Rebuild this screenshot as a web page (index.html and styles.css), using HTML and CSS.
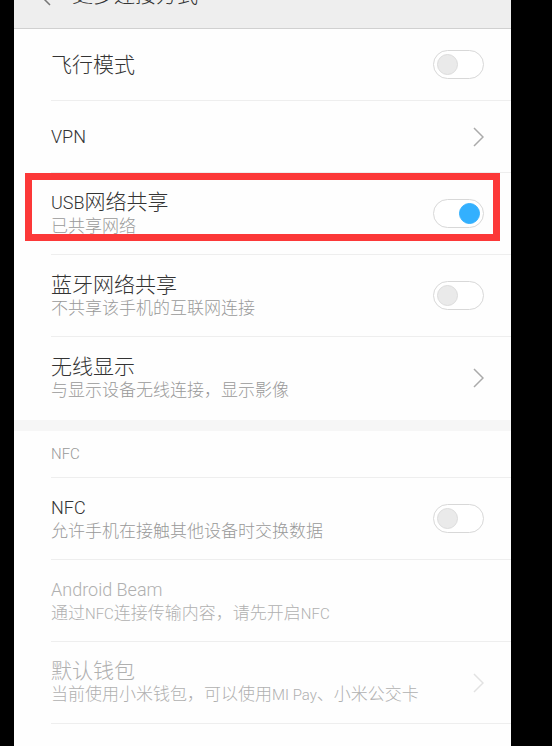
FILE: index.html
```html
<!DOCTYPE html>
<html lang="zh-CN">
<head>
    <meta charset="UTF-8">
    <meta name="viewport" content="width=device-width, initial-scale=1.0">
    <title>更多连接方式</title>
    <link rel="stylesheet" href="styles.css">
</head>
<body>
    <div class="screen">
        <header class="header">
            <a href="#" class="back" aria-label="返回">
                <svg width="12" height="24" viewBox="0 0 12 24"><path d="M11 2L1 12l10 10"/></svg>
            </a>
            <h1 class="header-title">更多连接方式</h1>
        </header>

        <main>
            <section class="group">
                <label class="row single">
                    <span class="title">飞行模式</span>
                    <input type="checkbox" class="switch">
                </label>
                <a href="#" class="row single">
                    <span class="title"><span class="latin">VPN</span></span>
                    <svg class="arrow" width="11" height="20" viewBox="0 0 11 20"><path d="M1 1l9 9-9 9"/></svg>
                </a>
                <label class="row highlight">
                    <span class="text">
                        <span class="title"><span class="latin">USB</span>网络共享</span>
                        <span class="summary">已共享网络</span>
                    </span>
                    <input type="checkbox" class="switch" checked>
                </label>
                <label class="row">
                    <span class="text">
                        <span class="title">蓝牙网络共享</span>
                        <span class="summary">不共享该手机的互联网连接</span>
                    </span>
                    <input type="checkbox" class="switch">
                </label>
                <a href="#" class="row">
                    <span class="text">
                        <span class="title">无线显示</span>
                        <span class="summary">与显示设备无线连接，显示影像</span>
                    </span>
                    <svg class="arrow" width="11" height="20" viewBox="0 0 11 20"><path d="M1 1l9 9-9 9"/></svg>
                </a>
            </section>

            <!-- NFC settings -->
            <section class="group">
                <h2 class="group-title"><span class="latin">NFC</span></h2>
                <label class="row">
                    <span class="text">
                        <span class="title"><span class="latin">NFC</span></span>
                        <span class="summary">允许手机在接触其他设备时交换数据</span>
                    </span>
                    <input type="checkbox" class="switch">
                </label>
                <a href="#" class="row disabled" aria-disabled="true">
                    <span class="text">
                        <span class="title"><span class="latin">Android Beam</span></span>
                        <span class="summary">通过<span class="latin">NFC</span>连接传输内容，请先开启<span class="latin">NFC</span></span>
                    </span>
                </a>
                <a href="#" class="row disabled" aria-disabled="true">
                    <span class="text">
                        <span class="title">默认钱包</span>
                        <span class="summary">当前使用小米钱包，可以使用<span class="latin">MI Pay</span>、小米公交卡</span>
                    </span>
                    <svg class="arrow" width="11" height="20" viewBox="0 0 11 20"><path d="M1 1l9 9-9 9"/></svg>
                </a>
            </section>
        </main>
    </div>
</body>
</html>
```

FILE: styles.css
```css
*, *::before, *::after {
    box-sizing: border-box;
}

body {
    margin: 0;
    padding: 0 41px 0 14px;
    background-color: #000;
    font-family: Roboto, "Noto Sans CJK SC", sans-serif;
    font-weight: 300;
    color: #333;
    overflow: hidden;
}

.screen {
    display: flow-root;
    min-height: 100vh;
    background-color: #fefefe;
}

/* the bar is partly scrolled off the top */
.header {
    display: flex;
    align-items: center;
    gap: 21px;
    height: 68px;
    margin-top: -39px;
    padding-left: 25px;
    background-color: #eee;
    border-bottom: 1px solid #d0d0d0;
}

.back {
    display: flex;
}

.back svg, .arrow {
    fill: none;
    stroke: #777;
    stroke-width: 1.5;
}

.header-title {
    margin: 0;
    font-size: 21px;
    font-weight: 300;
    line-height: 24px;
}

.group {
    padding-bottom: 1px;
}

.group + .group {
    border-top: 11px solid #f6f6f6;
}

.group-title {
    margin: 0 0 0 37px;
    border-bottom: 1px solid #eee;
    font-size: 17px;
    font-weight: 300;
    line-height: 45px;
    color: #999;
}

.row {
    position: relative;
    display: flex;
    align-items: center;
    justify-content: space-between;
    min-height: 82px;
    margin-left: 37px;
    padding-right: 27px;
    border-bottom: 1px solid #eee;
    color: #333;
    text-decoration: none;
}

.group:first-child .row:last-child {
    border-bottom: none;
}

.single {
    min-height: 72px;
}

.text {
    display: flex;
    flex-direction: column;
}

.title {
    font-size: 21px;
    line-height: 24px;
}

.title .latin {
    font-size: 18px;
}

.summary {
    font-size: 17px;
    line-height: 22px;
    color: #999;
    white-space: nowrap;
}

.summary .latin, .group-title .latin {
    font-size: 15px;
}

.disabled .title, .disabled .summary {
    color: #b0b0b0;
}

.arrow {
    flex: none;
    stroke: #aaa;
}

.disabled .arrow {
    stroke: #e2e2e2;
}

.switch {
    appearance: none;
    flex: none;
    display: flex;
    align-items: center;
    width: 51px;
    height: 29px;
    margin: 0;
    padding: 0 3px;
    border: 1px solid #d8d8d8;
    border-radius: 15px;
    background-color: #fff;
}

.switch::before {
    content: "";
    width: 21px;
    height: 21px;
    border: 1px solid #dcdcdc;
    border-radius: 50%;
    background-color: #eaeaea;
}

.switch:checked {
    justify-content: flex-end;
}

.switch:checked::before {
    border-color: #33b0fe;
    background-color: #33b0fe;
}

/* red frame drawn over the USB row */
.highlight::after {
    content: "";
    position: absolute;
    top: 0;
    left: -26px;
    right: 11px;
    height: 68px;
    border: 7px solid #fc3838;
}
```
